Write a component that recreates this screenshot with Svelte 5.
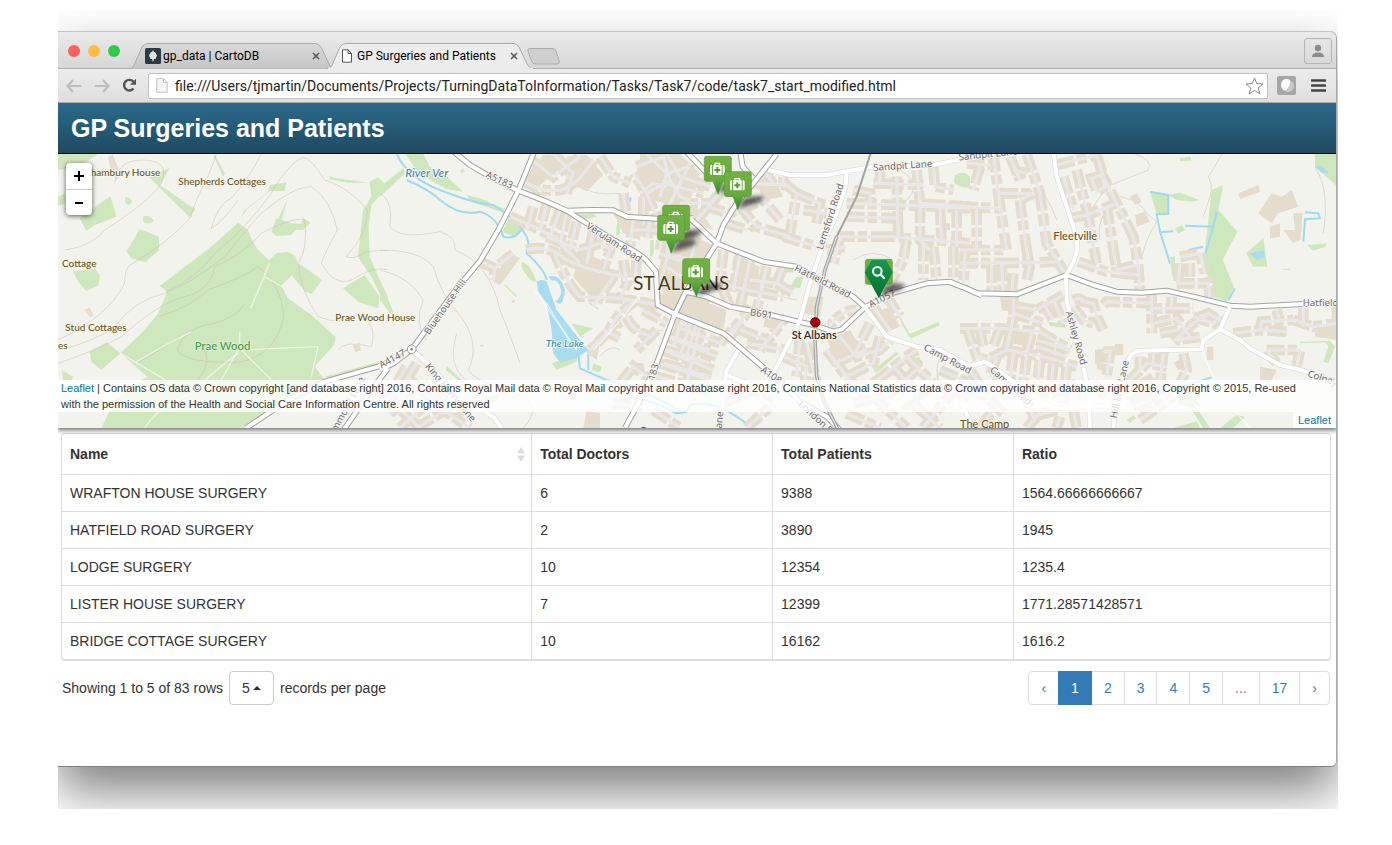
<script>
  const rows = [
    ['WRAFTON HOUSE SURGERY', '6', '9388', '1564.66666666667'],
    ['HATFIELD ROAD SURGERY', '2', '3890', '1945'],
    ['LODGE SURGERY', '10', '12354', '1235.4'],
    ['LISTER HOUSE SURGERY', '7', '12399', '1771.28571428571'],
    ['BRIDGE COTTAGE SURGERY', '10', '16162', '1616.2'],
  ];
  const pages = ['‹', '1', '2', '3', '4', '5', '...', '17', '›'];
  let pageSize = $state('5');

  // Map units: three per CSS pixel. Every tile carries its own left offset.
  const tiles = [
    {
      x: 0,
      woods: [
        'M540 218 L570 240 582 270 600 300 633 330 617 378 670 408 690 445 760 495 833 562 828 585 770 650 800 690 690 750 560 834 130 834 170 750 250 690 270 682 187 610 260 540 300 490 328 425 305 408 380 350 460 290Z',
        'M633 330 L655 310 690 306 712 318 720 342 700 378 668 408 617 378Z',
        'M700 375 L722 340 792 390 762 432 742 425Z',
        'M640 245 L655 205 700 220 730 222 735 203 757 218 735 240 712 240 700 255 655 258Z',
        'M245 237 L303 260 303 300 262 337 220 325 205 305Z',
        'M65 205 L158 138 175 200 110 225 85 242Z',
        'M45 365 L110 355 125 375 122 405 85 424 60 395Z',
        'M95 605 L145 577 187 610 130 660 100 635Z',
        'M0 12 L120 12 85 35 60 50 0 60Z M0 140 L22 130 22 160 0 168Z',
        'M255 200 Q270 190 288 212 Q272 226 256 216Z M200 145 Q212 134 222 155 Q214 170 203 160Z',
        'M272 80 L335 55 305 105 412 178 395 202Z',
        'M470 12 L500 70 495 80 468 20Z',
        'M545 210 L560 180 630 125 635 105 685 97 680 122 635 123 570 175Z M660 210 L688 145 672 208Z',
        'M815 78 L835 85 890 92 930 98 870 98 815 88Z',
        'M935 95 L960 82 990 110 940 165 932 230 935 320 970 400 990 440 990 480 940 380 900 320 915 180 940 140Z',
        'M855 415 L920 375 965 440 960 475 900 455Z',
        'M800 680 L960 636 965 645 830 690Z',
        'M12 660 L45 680 40 690 15 690Z',
      ],
      water: [], streams: [],
      contours: [
        'M475 12 Q460 60 430 120 T400 200 Q330 280 215 345 Q200 360 200 400 Q150 500 0 570',
        'M325 425 Q420 380 470 310 Q560 240 640 130 Q690 40 735 22 Q760 25 800 90 Q870 110 928 180 Q930 250 865 320 Q890 330 925 305 Q960 300 990 302',
        'M0 600 Q100 580 170 530 Q230 450 320 430 Q400 400 500 320 Q540 270 600 200 Q700 110 760 110 Q820 150 838 240 Q800 310 790 340 Q830 410 880 390 Q950 345 990 360',
        'M0 640 Q120 600 190 560 Q300 460 380 440 T470 350 Q560 310 610 250 Q700 200 740 210 Q750 300 720 340 Q730 430 780 500 Q850 530 900 490 Q960 520 940 590 Q860 570 840 600',
        'M300 500 Q400 470 450 420 Q560 380 600 350 Q670 400 678 500 Q650 620 540 637 Q380 640 358 600 Q380 530 470 520 Q540 500 560 460',
        'M20 300 Q100 290 140 240 Q280 150 310 100 Q340 30 250 30 Q180 30 170 100',
        'M460 235 Q480 160 520 145 Q570 90 610 12 M540 150 Q500 210 460 235',
        'M240 640 Q300 600 400 540 M420 690 Q460 640 440 600',
      ],
      built: ['M150 20 l14 -6 26 60 -14 16 -16 -20z', 'M80 480 l14 -8 12 24 -10 6z', 'M885 585 l20 -6 4 22 -18 6z'],
      paths: ['M635 340 L578 475 M617 378 L668 408', 'M187 610 L340 700 M235 635 Q330 580 400 545 M545 545 L545 600 780 590 M780 590 L760 680 M550 600 L650 700 M540 600 L490 690', 'M260 834 Q300 770 400 730 Q470 660 540 610'],
      minor: [], roads: [],
      main: ['M1000 632 L960 650 800 695 690 750 565 834', 'M990 655 L940 720 850 850'],
    },
    {
      x: 966,
      woods: [
        'M0 110 L70 55 75 70 0 140Z', 'M75 12 L130 12 150 50 200 80 250 125 200 118 150 90 110 60Z', 'M260 135 L300 145 380 180 360 185 270 152Z',
        'M390 200 L430 232 408 262 365 245Z', 'M425 335 Q450 340 470 395 Q450 400 425 350Z',
        'M375 403 L412 438 408 442 372 406Z', 'M0 412 Q30 450 40 490 L30 490 0 450Z', 'M575 520 L640 535 600 560Z', 'M515 640 L590 615 590 635 530 660Z', 'M640 640 L665 650 660 668 636 660Z', 'M200 648 L300 740 270 720 197 660Z', 'M712 200 L725 200 718 255 708 255Z M575 195 L640 190 650 200 600 210Z', 'M815 270 h6 v40 h-6z M105 600 l25 15 -5 8 -18 -12z',
        'M300 745 L360 735 340 760Z', 'M450 125 l30 0 5 12 -20 -2z',
      ],
      water: ['M470 395 Q485 385 500 395 L530 480 580 545 625 600 590 625 540 637 520 610 515 540 500 460 475 425Z', 'M505 380 Q540 370 555 420 Q552 455 540 462 L525 455 Q545 445 543 420 Q535 385 515 392Z'],
      streams: ['M50 12 Q80 80 180 120 T340 165 Q440 230 445 280 L440 310 Q495 360 500 390', 'M80 90 Q150 120 180 150 Q240 200 300 185 Q350 200 370 260 Q400 270 425 240', 'M595 610 L600 655 680 690 760 710 Q840 750 870 765 L910 790', 'M625 600 L625 660 M735 160 L752 145 750 155'],
      contours: [
        'M0 130 Q40 150 30 230 Q60 270 180 245 Q230 260 225 300 Q330 340 360 480 Q400 580 420 640',
        'M0 300 Q120 300 160 350 Q180 430 250 510 Q300 590 265 660 Q280 690 390 725 T430 834',
        'M0 360 Q90 380 130 450 Q100 520 140 570 M230 550 Q200 650 260 690',
        'M500 12 Q530 60 590 100 Q630 140 720 130 M730 480 Q760 560 850 540 M660 620 Q690 580 720 600',
      ],
      built: [
        'M430 90 l60 -76 60 0 -20 50 -60 50z', 'M560 20 l60 -6 50 60 -50 50 -40 -20z', 'M770 30 l80 -10 60 40 40 60 -60 50 -70 -20 -50 -60z', 'M300 335 l60 20 40 -40 20 10 -60 80 -20 -10 5 -30 -50 -20z', 'M700 190 l90 20 -10 60 -50 -20z', 'M840 290 l90 -50 60 60 0 190 -100 -10 -45 -60z', 'M600 300 l60 30 40 60 -60 60 -60 -70z', 'M620 610 l20 -40 20 10 -10 50z', 'M690 520 l30 -10 10 20 -25 10z M770 640 l20 0 5 30 -20 0z', 'M395 450 h10 v8 h-10z M300 584 h10 v6 h-10z',
        'M620 780 l40 10 0 44 -50 0z M240 60 l10 -5 5 10 -10 5z',
      ],
      paths: ['M465 420 Q560 560 590 600', 'M640 600 Q700 540 770 450', 'M500 460 Q560 560 590 600'],
      minor: [
        'M455 30 L520 80 600 20', 'M430 90 Q480 130 540 120 Q590 110 640 30', 'M520 12 L580 70 560 130', 'M660 20 L700 80 750 100', 'M770 50 L850 20 870 90 800 130 760 70', 'M800 130 L830 205 M870 90 L900 140 930 150', 'M860 12 L900 80 990 110', 'M930 40 L880 140 850 200',
        'M390 200 L460 230 540 270 M460 170 L440 240 M500 160 L480 240 M540 180 L510 260', 'M440 300 Q500 280 560 330 Q620 360 730 380', 'M400 310 L345 355 340 390 M345 355 L300 335', 'M500 260 L600 300 660 280 700 300', 'M560 190 L540 280 600 340', 'M590 215 L570 300 M640 240 L620 340 M700 270 L670 360', 'M730 130 L740 200 M790 140 L790 205 M750 240 L870 240 M760 210 L750 290 M810 210 L800 270 M870 210 L860 330 840 400', 'M520 300 Q560 400 600 440 L720 445 833 465', 'M730 330 L740 400 720 450 M770 330 L765 400', 'M700 380 L640 470', 'M670 540 L720 565 M770 450 Q700 500 690 540 L630 600',
        'M740 500 Q760 550 820 560 M790 480 L860 520 M830 540 L770 600', 'M870 560 L990 600 M860 600 L990 640 M850 640 L990 680 M900 500 L940 560 M930 520 L900 620 M960 530 L920 700',
        'M720 700 L760 650 800 680 M700 760 L790 770 M830 700 L960 720 M820 780 L900 834',
        'M0 760 L60 720 110 640 M30 790 L100 740 150 700 M60 834 L130 770 200 730 M110 834 L180 790 250 780 M20 740 L120 834 M80 680 L190 780 270 834 M80 650 L50 700',
        'M840 310 L920 340 990 350 M860 350 L930 400 M950 260 L930 340',
      ],
      roads: ['M95 598 L140 640 200 700 290 770 340 800 365 834'],
      main: [
        'M215 0 L270 45 330 80 415 122 500 155 560 182 620 220 700 270 Q780 310 800 332 L828 365 833 465 885 492 1010 542',
        'M465 0 L415 122 355 240 300 333 235 410 95 598 40 640 0 660', 'M560 182 L640 180 700 181 740 200 830 206 940 205',
      ],
    },
    {
      x: 1746,
      woods: ['M945 75 Q970 60 990 80 L990 112 Q960 115 942 98Z', 'M320 235 L340 230 338 248Z', 'M760 465 L810 552 895 515 900 525 812 566 790 530Z', 'M700 660 L770 605 775 612 710 668Z', 'M820 630 l15 -10 15 20 -20 20z', 'M450 410 l20 -30 20 0 -10 35z M410 355 l50 0 0 12 -40 0z', 'M780 770 L860 720 870 728 800 785Z', 'M30 270 h8 v50 h-8z'],
      water: [], streams: ['M0 745 L60 765 110 790 140 785 150 765 Q220 750 290 800 L340 834'],
      contours: ['M640 330 Q700 290 760 330 M780 60 Q850 100 800 150 T760 200', 'M900 620 Q870 700 940 760', 'M350 400 Q400 440 470 450'],
      built: [
        'M0 12 L120 12 180 70 150 120 70 100 0 160Z', 'M70 220 L230 290 190 340 60 300Z', 'M60 430 L180 450 260 480 250 540 110 490 50 460Z', 'M240 60 l60 10 -20 70 -50 -10z', 'M350 100 l60 0 20 40 -60 10z', 'M280 320 l80 30 -20 90 -60 -20z', 'M490 440 l60 0 -10 60 -50 -10z', 'M690 490 l60 -20 30 60 -50 20z', 'M560 570 l70 -30 30 50 -60 50z', 'M380 480 l60 20 -20 40 -50 -10z', 'M100 150 l80 30 40 60 -60 -20z', 'M900 220 l30 0 0 20 -30 0z',
      ],
      paths: ['M560 500 v60'],
      minor: [
        'M20 12 L80 70 60 140 M80 70 L150 50 M70 100 L190 130', 'M0 130 L40 100 80 110', 'M70 210 L60 300 M100 210 L90 310 150 330 M120 160 L210 160 250 120', 'M170 210 L240 130 M200 170 L270 190 330 160', 'M300 170 L350 230 450 260 M260 220 L320 240 M300 180 L370 150 420 210', 'M320 100 L440 105 470 130 450 250', 'M370 60 L400 100 M430 80 L430 110', 'M430 260 L530 290 M470 130 L540 160 530 220 M490 180 L560 190', 'M250 300 L240 400 270 470 M300 310 L280 420 M330 330 L300 470 340 490 M380 350 L350 480 M430 350 L410 400 330 390', 'M240 400 L320 420 430 440 M410 400 L460 430',
        'M620 160 L780 165 990 175 M620 200 L770 205 M590 260 L760 260 990 280 M770 80 L775 260 M830 60 L840 160 990 170 M700 100 L850 105 M880 50 L885 110 940 120 M840 165 L840 270 870 300 M900 170 L905 280 M950 180 L950 290', 'M640 120 L690 130 690 160 M720 65 L720 100', 'M800 270 L790 330 740 420 M850 280 L850 390 M880 290 L890 390 M940 290 L940 395', 'M560 300 L620 290 M600 260 L580 340',
        'M550 560 Q590 480 650 480 M600 560 L650 620 720 600 750 570 M690 520 L640 620 M720 560 L700 640 620 680 M560 600 L620 680 680 740 M580 640 L680 600 M700 470 L750 540 M740 440 L780 500', 'M590 720 L700 700 800 620 830 600 M640 760 L740 740 840 650 M800 620 L880 700 M760 650 L840 740',
        'M110 530 L240 580 M80 560 L230 620 M70 600 L220 660 M60 640 L210 690 M50 680 L200 720 M240 580 L330 480 M270 560 L310 510 M300 540 L380 570 M320 580 L440 600 M130 500 L100 590 M170 520 L140 620', 'M360 600 L440 500 M430 620 L500 650 490 740 M480 560 L470 680 M500 580 L530 700',
        'M270 700 L400 740 M250 760 L340 720 M320 834 L400 760 M620 790 L720 834 M700 740 L800 834 M820 760 L900 834 M880 700 L990 740 M900 660 L990 700 M850 834 L940 720',
      ],
      roads: ['M620 62 L617 110 590 190 540 310 510 400 480 510 400 670', 'M385 60 L450 75 560 75 620 64 700 50 880 45 990 22', 'M295 600 L258 665 240 834', 'M258 675 L470 755', 'M675 472 L740 560 830 590 900 600 1000 655'],
      main: [
        'M300 0 L308 50 340 85', 'M410 12 L340 100 290 160 250 225 230 280 195 335 135 430 105 492 50 640 0 750 -45 834', 'M135 0 L215 85',
        'M150 205 L230 280 280 300 370 335 470 350 530 385 640 440 675 472 755 430 860 400 930 395 990 420 1025 436', 'M135 425 L200 440 270 470 350 485 475 515 520 525 580 545 605 538 675 472', 'M100 490 L250 550 385 665 480 755 560 800 600 840',
      ],
    },
    {
      x: 2706,
      woods: ['M570 125 L625 135 625 190 590 192Z', 'M625 135 L660 128 718 150 700 155 650 150Z', 'M755 120 L790 105 775 180 832 245 788 330 822 410 800 455 750 435 760 400 730 360 735 300Z', 'M645 235 l20 -10 10 15 -20 10z M660 25 l30 -5 5 12 -35 2z', 'M858 310 L910 265 922 350 880 350Z', 'M1065 12 L1135 12 1135 112 1065 50Z', 'M630 320 l15 0 0 60 -8 0z M265 515 l50 8 0 10 -45 -5z', 'M1040 285 L1100 280 1095 290 1060 302Z', 'M1020 575 L1110 572 1125 590 1105 640 1090 635 1105 590 1095 577 1020 580Z', 'M655 730 L700 740 725 770 700 760 750 834 730 834 690 770 655 765Z', 'M780 834 L830 795 855 800 820 834Z M640 834 l70 -20 10 20z', 'M0 75 Q25 70 30 100 Q15 118 0 108Z', 'M500 810 l20 -14 8 8 -18 14z'],
      water: ['M868 310 L910 303 915 320 890 330Z', 'M1065 50 L1080 45 1108 70 1085 68Z'],
      streams: ['M570 125 L625 135 625 192 590 192 600 245 630 340 M600 247 L640 244 M675 227 L760 230 770 185 M730 290 L685 300 M760 230 L735 315', 'M1035 187 L1075 190 1080 205 1035 208 1030 275', 'M825 415 L805 450', 'M630 720 L755 682'],
      contours: ['M525 12 Q580 30 565 60 L440 110 380 200', 'M480 140 Q540 150 560 190 L590 215 Q550 280 545 330', 'M785 12 Q760 60 745 80 Q760 110 750 140 T730 200', 'M1065 50 Q1110 120 1090 250 M440 180 Q410 220 420 270', 'M220 90 Q260 130 290 210'],
      built: [
        'M120 440 l50 0 0 42 -45 0z', 'M150 540 l60 0 -5 50 -50 -10z', 'M405 600 l30 -4 5 40 -35 5z M465 582 l25 0 0 34 -25 0z M410 638 l35 4 0 20 -35 -4z', 'M525 195 l30 -10 15 30 -40 15z M510 140 l20 -10 15 25 -20 10z', 'M835 130 l60 -25 5 20 -60 22z', 'M895 190 l40 -60 30 10 30 -20 20 50 -60 20 -20 30z', 'M1000 190 l28 0 -6 80 -15 0z', 'M930 230 l30 -10 0 40 -30 5z M970 240 l30 0 20 30 -20 10z', 'M735 380 h25 v20 h-25z', 'M1065 530 l65 -10 0 50 -65 -10z', 'M900 650 l50 10 -20 40 -30 -10z', 'M1115 470 l14 0 0 40 -14 0z', 'M520 700 l50 -30 40 50 -60 70 -40 -30z', 'M970 356 h20 v4 h-20z', 'M740 590 h20 v40 h-20z', 'M640 640 l30 -20 10 30 -25 10z',
      ],
      paths: ['M728 600 Q740 660 830 790 L870 834'],
      minor: [
        'M100 12 L120 170 140 300 M150 20 L180 90 M200 12 L240 130 260 280 318 375', 'M0 170 L120 175 M0 300 L130 300 M0 340 L220 338 290 335 M50 170 L50 300 M15 300 L10 410 M95 345 L95 425 M120 130 L210 130 M180 150 Q190 240 205 330 M180 150 L220 130 M60 50 L40 120 M20 40 L90 45 M160 60 L200 70', 'M125 340 L130 430 M160 370 L155 430 M210 345 L200 390',
        'M290 45 L410 15 430 80 470 160 520 260 535 350 540 420 M330 205 L380 195 470 160 M350 60 L385 200 410 340 M395 85 L425 75 435 110 410 125Z M440 170 L470 360 M355 335 L440 365 535 375 M470 360 L530 345', 'M310 80 L340 180',
        'M430 465 L440 455 575 460 M575 430 L575 550 M635 440 L635 475 575 475 M635 475 L700 475 M650 400 L745 400 750 445 M660 340 L655 395 M660 320 L720 310 735 370 M690 340 L690 380', 'M580 520 L650 505 690 560 M600 550 L660 540 M640 575 L700 520 750 490 M700 500 L760 520 780 500 M720 560 L650 570', 'M720 500 L745 490 790 520',
        'M820 550 L900 540 980 545 M900 540 L905 515 1000 510 M950 480 L960 515 M1030 475 L1030 530 M1000 510 L1060 530 1130 520', 'M920 600 L1020 600 1010 650 M920 600 L950 640',
        'M170 470 L230 480 310 435 M160 490 L250 520 M160 440 L160 500 140 600 M0 535 L120 535 240 545 330 600 M140 600 L250 620 350 650 M140 600 L80 630 M120 535 L100 590 M60 535 L70 590 M20 535 L50 620 80 630 M215 550 L200 610 M230 570 L330 600 M230 590 L320 620', 'M250 460 L280 510 M280 450 L310 520', 'M340 450 Q360 440 370 455 L400 460 410 500 430 540 M340 470 L370 510 400 520 M400 460 L370 455',
        'M110 620 L90 680 M160 610 L150 690 M200 620 L190 700 M240 630 L230 720 M280 640 L270 740 M320 650 L310 760 M100 680 L200 720 280 730 350 700', 'M430 605 L450 605 440 680 M540 620 L540 660 M580 610 L580 650 M610 605 L600 700 M670 610 L680 660 660 700 M500 740 L560 700 620 720 M520 770 L600 740 M500 700 L560 640 620 650 M540 810 L640 740',
        'M0 700 L80 740 130 790 M30 660 L70 720 M60 834 L100 780 M190 720 L220 800 290 780 M200 834 L240 790 M340 780 L350 834 M300 800 L290 834 M400 700 L440 740',
      ],
      roads: ['M280 0 L290 80 330 200 Q354 270 352 290 Q350 330 318 375 L320 450 345 560 370 650 385 720 390 834', 'M460 834 L470 740 500 640 Q515 604 535 602 L725 598 730 570 780 538 810 470', 'M780 538 L840 570 870 595 960 645 1030 662 1135 700', 'M0 670 L40 645 75 635 100 650 180 710 280 775 340 775 390 765 470 775', 'M0 750 L40 834', 'M0 22 L190 0'],
      main: ['M-35 395 L30 420 50 430 170 433 320 375 400 405 470 425 545 428 620 422 700 440 810 467 870 470 1030 462 1150 458'],
    },
  ];

  // [text, x, y, rotation, class]
  const labels = [
    ['hambury House', 98, 68, 0, 'place'], ['Shepherds Cottages', 361, 94, 0, 'place'], ['Cottage', 12, 340, 0, 'place'], ['Stud Cottages', 22, 533, 0, 'place'], ['es', 0, 588, 0, 'place'],
    ['Prae Wood House', 832, 502, 0, 'place'], ['Fleetville', 2986, 259, 0, 'place big'], ['The Camp', 2706, 822, 0, 'place big'],
    ['Prae Wood', 410, 587, 0, 'wood'], ['River Ver', 1042, 69, 0, 'river big-water'], ['The Lake', 1463, 581, 0, 'river'],
    ['A5183', 1286, 72, 25, 'road'], ['Verulam Road', 1588, 225, 33, 'road'], ['Bluehouse Hill', 1105, 550, -55, 'road'], ['A4147', 966, 647, -29, 'road'],
    ['King Harry Lane', 1108, 644, 50, 'road'], ['183', 1780, 690, -75, 'road'], ['Sandpit Lane', 2446, 53, -4, 'road'], ['Sandpit Lane', 2702, 22, -6, 'road'],
    ['Lemsford Road', 2284, 298, -72, 'road'], ['Hatfield Road', 2212, 352, 27, 'road'], ['B691', 2076, 486, 9, 'road'], ['A1057', 2434, 464, -26, 'road'], ['A1081', 2112, 656, 35, 'road'],
    ['London Road', 2226, 757, 43, 'road'], ['Lane', 1980, 850, -85, 'road'], ['Camp Road', 2600, 590, 28, 'road'], ['Camp Road', 2800, 655, 42, 'road'], ['Ashley Road', 3032, 484, 74, 'road'],
    ['Hill End Lane', 3166, 804, -78, 'road'], ['Hatfield Road', 3734, 457, 0, 'road'], ['Colney', 3750, 670, 18, 'road'], ['Hammond Lane', 810, 875, -62, 'road'],
    ['ST ALBANS', 1726, 402, 0, 'city'], ['St Albans', 2201, 557, 0, 'station'],
  ];
  const markers = [[1938, 18], [1998, 64], [1813, 165], [1798, 195], [1873, 325], [2421, 327]];
</script>

{#snippet tabShape(active)}
  <svg class="tab-shape" viewBox="0 0 208 26" preserveAspectRatio="none" aria-hidden="true">
    <path d="M0 25.500 C4 25 5 23 6 20 L13 4 Q15 .5 19 .5 H186 Q190 .5 192 4 L200 21 Q202 25.500 206 25.500" fill={active ? '#ececec' : 'url(#tab-idle)'} stroke="#aaa" />
    {#if active}<path d="M1 25.500 H206" stroke="#ececec" stroke-width="2" />{/if}
  </svg>
{/snippet}

<main class="stage">
  <div class="window">
    <div class="tabstrip">
      <div class="lights"><i class="red"></i><i class="amber"></i><i class="green"></i></div>
      <div class="tabs">
        <button class="tab idle">
          <svg class="defs" width="0" height="0" aria-hidden="true"><defs><linearGradient id="tab-idle" x2="0" y2="1"><stop stop-color="#d9d9d9" /><stop offset="1" stop-color="#c6c6c6" /></linearGradient></defs></svg>
          {@render tabShape(false)}
          <svg class="fav" width="16" height="16" viewBox="0 0 16 16" aria-hidden="true"><rect width="16" height="16" rx="1.500" fill="#2c3b41" /><path d="M8 2 L9 4 10 4 12 7.500 10.500 11 9 11 8 14 7 11 5.500 11 4 7.500 6 4 7 4Z" fill="#dfe4e6" /></svg>
          <span>gp_data | CartoDB</span>
          <svg class="close" width="8" height="8" viewBox="0 0 8 8" aria-hidden="true"><path d="M1 1 L7 7 M7 1 L1 7" stroke="#555" stroke-width="1.500" /></svg>
        </button>
        <button class="tab active">
          {@render tabShape(true)}
          <svg class="fav" width="12" height="14" viewBox="0 0 12 14" aria-hidden="true"><path d="M1.500 .8 H7 L10.500 4.200 V13.200 H1.500Z M7 1 V4.500 H10.500" fill="#fff" stroke="#555" /></svg>
          <span>GP Surgeries and Patients</span>
          <svg class="close" width="8" height="8" viewBox="0 0 8 8" aria-hidden="true"><path d="M1 1 L7 7 M7 1 L1 7" stroke="#555" stroke-width="1.500" /></svg>
        </button>
        <button class="newtab" aria-label="New tab"><svg width="33" height="17" viewBox="0 0 33 17"><path d="M3 .5 H25 Q28 .5 29 3 L32.300 13.500 Q32.500 16 30 16 H9 Q6 16 5 14 L.8 3 Q.5 .5 3 .5Z" fill="#cfcfcf" stroke="#aaa" /></svg></button>
      </div>
      <button class="profile" aria-label="Profile"><svg width="14" height="14" viewBox="0 0 14 14"><circle cx="7" cy="4" r="3.200" fill="#8c8c8c" /><path d="M1 13 Q1 8.500 7 8.500 T13 13Z" fill="#8c8c8c" /></svg></button>
    </div>

    <div class="toolbar">
      <button aria-label="Back"><svg width="16" height="14" viewBox="0 0 16 14"><path d="M7 1 L1.500 7 L7 13 M2 7 H15.500" fill="none" stroke="#bdbdbd" stroke-width="2.200" /></svg></button>
      <button aria-label="Forward"><svg width="16" height="14" viewBox="0 0 16 14"><path d="M9 1 L14.500 7 L9 13 M14 7 H.5" fill="none" stroke="#bdbdbd" stroke-width="2.200" /></svg></button>
      <button aria-label="Reload"><svg width="15" height="15" viewBox="0 0 15 15"><path d="M11.500 10.500 A5.300 5.300 0 1 1 11.300 3.600" fill="none" stroke="#555" stroke-width="2.400" /><path d="M14 .8 V6.800 H8Z" fill="#555" /></svg></button>
      <div class="address">
        <svg width="12" height="15" viewBox="0 0 12 15" aria-hidden="true"><path d="M.8 .5 H7.500 L11.200 4.200 V14.300 H.8Z M7.500 .5 V4.500 H11.200" fill="#f6f6f6" stroke="#c2c2c2" /></svg>
        <input aria-label="Address" value="file:///Users/tjmartin/Documents/Projects/TurningDataToInformation/Tasks/Task7/code/task7_start_modified.html" />
        <button aria-label="Bookmark"><svg width="19" height="18" viewBox="0 0 19 18"><path d="M9.500 1 L11.800 6.600 L18 7 L13.200 10.900 L14.900 16.800 L9.500 13.500 L4.100 16.800 L5.800 10.900 L1 7 L7.200 6.600Z" fill="#fff" stroke="#888" stroke-linejoin="round" /></svg></button>
      </div>
      <button aria-label="Extension"><svg width="19" height="19" viewBox="0 0 19 19"><rect width="19" height="19" rx="2" fill="#a6a6a6" /><circle cx="11" cy="10" r="6" fill="#c9c9c9" /><path d="M6 4 Q9 2 13 4 Q14 9 9 14 Q5 15 4 10 Q4 6 6 4Z" fill="#fff" /></svg></button>
      <button aria-label="Menu"><svg width="15" height="13" viewBox="0 0 15 13"><path d="M1 1.500 H14 M1 6.500 H14 M1 11.500 H14" stroke="#444" stroke-width="2.600" stroke-linecap="round" /></svg></button>
    </div>

    <header><h1>GP Surgeries and Patients</h1></header>

    <section class="map" aria-label="Map of St Albans">
      <svg class="canvas" viewBox="0 12 3834 822" preserveAspectRatio="xMidYMid slice">
        <defs>
          <linearGradient id="pin" x2="0" y2="1"><stop stop-color="#72b043" /><stop offset=".6" stop-color="#68ab3c" /><stop offset="1" stop-color="#278b2b" /></linearGradient>
          <linearGradient id="pin-dark" x2="0" y2="1"><stop stop-color="#1a9850" /><stop offset="1" stop-color="#006f2b" /></linearGradient>
          <filter id="soft" x="-50%" y="-50%" width="200%" height="200%"><feGaussianBlur stdDeviation="7" /></filter>
        </defs>
        <rect y="0" width="3834" height="840" fill="#f3f3ed" />
        {#each tiles as t}<g transform="translate({t.x} 0)" fill="#cfe7bd">{#each t.woods as d}<path {d} />{/each}</g>{/each}
        {#each tiles as t}<g transform="translate({t.x} 0)" class="contour">{#each t.contours as d}<path {d} />{/each}</g>{/each}
        {#each tiles as t}
          <g transform="translate({t.x} 0)">
            <g fill="#a9dcee">{#each t.water as d}<path {d} />{/each}</g>
            <g class="stream">{#each t.streams as d}<path {d} />{/each}</g>
            <g fill="#e4dccd">{#each t.built as d}<path {d} />{/each}</g>
            <g class="houses">{#each t.minor as d}<path {d} />{/each}</g>
          </g>
        {/each}
        {#each tiles as t}
          <g transform="translate({t.x} 0)">
            <g class="verge">{#each t.minor as d}<path {d} />{/each}</g>
            <g class="lane">{#each t.minor as d}<path {d} />{/each}</g>
            <g class="track">{#each t.paths as d}<path {d} />{/each}</g>
            <g class="road-edge">{#each t.roads as d}<path {d} />{/each}</g>
            <g class="main-edge">{#each t.main as d}<path {d} />{/each}</g>
          </g>
        {/each}
        {#each tiles as t}<g transform="translate({t.x} 0)" class="road-fill">{#each t.roads as d}<path {d} />{/each}{#each t.main as d}<path {d} />{/each}</g>{/each}
        <g fill="none">
          <path d="M2441 0 L2396 140 2336 260" stroke="#a2a2a2" stroke-width="6" />
          <path d="M2336 260 L2301 360 2276 470 2271 570 2276 680 2296 750 2341 840" stroke="#a5a5a5" stroke-width="11" />
          <path d="M2336 260 L2301 360 2276 470 2271 570 2276 680 2296 750 2341 840" stroke="#dedede" stroke-width="4" />
        </g>
        <circle cx="1061" cy="598" r="13" fill="#fff" stroke="#999" stroke-width="3" /><circle cx="1061" cy="598" r="4" fill="#888" />
        {#each labels as [text, x, y, angle, kind]}
          <text class={kind} transform="translate({x} {y}) rotate({angle})" dy=".34em">{text}</text>
        {/each}
        <circle cx="2272" cy="517" r="14" fill="#b30000" stroke="#3b1512" stroke-width="3" />
        <circle cx="1757" cy="844" r="13" fill="#5b2a28" />
        {#each markers as [x, y]}
          <path transform="translate({x} {y})" d="M42 112 L62 80 Q94 70 118 76 Q118 90 98 96Z" fill="#000" opacity=".6" filter="url(#soft)" />
        {/each}
        {#each markers as [x, y]}
          <g transform="translate({x} {y})">
            <path d="M8 1 H75 Q82 1 82 8 V69 Q82 76 75 76 H57 L42 115 L27 76 H8 Q1 76 1 69 V8 Q1 1 8 1Z" fill="url(#pin)" stroke="#5a9a37" stroke-width="2" />
            <path d="M22 27 H24 V57 H22 Q18 57 18 52 V32 Q18 27 22 27Z M58 27 H56 V57 H58 Q62 57 62 52 V32 Q62 27 58 27Z M27 27 H31 V22 Q31 20 33 20 H47 Q49 20 49 22 V27 H53 V57 H27Z" fill="#fff" />
            <path d="M35 27 h10 v-3 h-10z" fill="#6cac3e" />
            <path d="M37 33 h6 v6 h6 v6 h-6 v6 h-6 v-6 h-6 v-6 h6z" fill="#529b31" />
          </g>
        {/each}
        <g transform="translate(2419 327)">
          <path d="M22 3 H66 L85 40 43 116 1 40Z" fill="url(#pin-dark)" />
          <circle cx="39" cy="37" r="13" fill="none" stroke="#fff" stroke-width="6" /><path d="M49 47 L59 57" stroke="#fff" stroke-width="7" stroke-linecap="round" />
        </g>
      </svg>
      <div class="zoom"><button aria-label="Zoom in"><svg width="10" height="10" viewBox="0 0 10 10"><path d="M5 0 V10 M0 5 H10" stroke="#000" stroke-width="2" /></svg></button><button aria-label="Zoom out"><svg width="10" height="10" viewBox="0 0 10 10"><path d="M1 5 H9" stroke="#000" stroke-width="2" /></svg></button></div>
      <div class="credits">
        <p><a href="#leaflet">Leaflet</a> | Contains OS data © Crown copyright [and database right] 2016, Contains Royal Mail data © Royal Mail copyright and Database right 2016, Contains National Statistics data © Crown copyright and database right 2016, Copyright © 2015, Re-used with the permission of the Health and Social Care Information Centre. All rights reserved</p>
        <p class="corner"><a href="#leaflet">Leaflet</a></p>
      </div>
    </section>

    <section class="data">
      <div class="frame">
        <table>
          <thead>
            <tr>
              <th class="name"><div>Name <svg width="8" height="15" viewBox="0 0 8 15" aria-hidden="true"><path d="M0 6.500 L4 0 L8 6.500Z M0 8.500 L4 15 L8 8.500Z" fill="#ddd" /></svg></div></th>
              <th class="doctors">Total Doctors</th><th class="patients">Total Patients</th><th>Ratio</th>
            </tr>
          </thead>
          <tbody>
            {#each rows as row}<tr>{#each row as cell}<td>{cell}</td>{/each}</tr>{/each}
          </tbody>
        </table>
      </div>
      <footer>
        <div class="info">
          <span>Showing 1 to 5 of 83 rows</span>
          <span class="size">
            <select id="page-size" bind:value={pageSize}><option>5</option><option>10</option><option>25</option></select>
            <svg width="8" height="4" viewBox="0 0 8 4" aria-hidden="true"><path d="M0 4 L4 0 L8 4Z" fill="#333" /></svg>
          </span>
          <label for="page-size">records per page</label>
        </div>
        <nav aria-label="Pages">
          {#each pages as p}<a href="#page" class:current={p === '1'} class:gap={p === '...'}>{p}</a>{/each}
        </nav>
      </footer>
    </section>
  </div>
</main>

<style>
  :global(body) { background: #fff; }
  .stage, .stage * { box-sizing: border-box; }
  .stage { margin: 10px 54px 36px 58px; padding: 21px 2px 43px 0; overflow: hidden; font: 14px/20px "Liberation Sans", Arial, sans-serif; color: #333; }
  .window { background: #fff; border-radius: 0 7px 5px 0; box-shadow: 1px 0 0 #a8a8a8, 0 1px 0 #808080, 0 25px 50px rgba(0, 0, 0, .5); }
  button { border: 0; padding: 0; background: none; font: inherit; color: inherit; }
  button, a { cursor: pointer; }
  svg { display: block; flex: none; }
  a { color: #337ab7; text-decoration: none; }

  .tabstrip { display: flex; align-items: flex-end; height: 38px; padding-left: 10px; background: linear-gradient(#ebebeb, #d6d6d6); border-top: 1px solid #c4c4c4; border-bottom: 1px solid #b0b0b0; border-radius: 0 7px 0 0; }
  .lights { display: flex; gap: 8px; align-self: center; margin-top: 2px; }
  .lights i { width: 12px; height: 12px; border-radius: 50%; }
  .red { background: #fc605b; } .amber { background: #fdbc40; } .green { background: #34c84a; }
  .tabs { display: flex; align-items: flex-end; flex: 1; margin: 0 0 -1px 9px; font: 12px/16px Roboto, Inter, sans-serif; color: #000; }
  .tab { position: relative; display: flex; align-items: center; width: 208px; height: 26px; padding: 0 17px 0 16px; text-align: left; }
  .tab span { position: relative; flex: 1; white-space: nowrap; }
  .tab .fav, .tab .close { position: relative; }
  .tab .fav { margin-right: 2px; }
  .tab.idle { margin-right: -10px; }
  .tab.active { padding-left: 14px; }
  .tab.active .fav { margin-right: 4px; }
  .tab-shape { position: absolute; inset: 0; width: 100%; height: 100%; }
  .defs { position: absolute; }
  .newtab { margin: 0 0 4px -8px; }
  .profile { display: grid; place-items: center; width: 28px; height: 26px; margin: 0 4px 4px 0; border: 1px solid #b5b5b5; border-radius: 3px; }

  .toolbar { display: flex; align-items: center; gap: 12px; height: 34px; padding: 0 10px 0 8px; background: linear-gradient(#ececec, #dfdfdf); border-bottom: 1px solid #aaa; }
  .address { display: flex; align-items: center; flex: 1; gap: 7px; height: 26px; margin: 0 -3px 0 -1px; padding: 0 3px 0 7px; background: #fff; border: 1px solid #c0c0c0; border-radius: 2px; }
  .address input { flex: 1; min-width: 0; padding: 0; border: 0; outline: 0; background: none; color: #222; font: 14px/20px Roboto, Inter, sans-serif; }
  .toolbar > button:last-child { margin-left: 3px; }

  header { height: 51px; padding: 0 13px; background: linear-gradient(#2b6a8a, #1f4a61); border-bottom: 1px solid #000; }
  h1 { margin: 0; color: #fff; font-size: 25px; line-height: 50px; font-weight: 700; }

  .map { position: relative; height: 274px; box-shadow: 0 1px 5px 1px rgba(0, 0, 0, .6); clip-path: inset(0 0 -8px 0); }
  .canvas { width: 100%; height: 100%; }
  .contour path { fill: none; stroke: #c9bdb0; stroke-opacity: .5; stroke-width: 3; }
  .stream path { fill: none; stroke: #9fdaf0; stroke-width: 6; stroke-linejoin: round; }
  .houses path { fill: none; stroke: #e4dccd; stroke-width: 32; stroke-dasharray: 54 9 28 12 74 10 36 16; }
  .verge path { fill: none; stroke: #efece3; stroke-width: 9; }
  .lane path { fill: none; stroke: #e6e6ed; stroke-width: 5; }
  .track path { fill: none; stroke: #fff; stroke-opacity: .6; stroke-width: 4; }
  .road-edge path, .main-edge path, .road-fill path { fill: none; stroke-linejoin: round; }
  .road-edge path { stroke: #d6d6d6; stroke-width: 15; }
  .main-edge path { stroke: #a3a3a3; stroke-width: 18; }
  .road-fill path { stroke: #fff; stroke-width: 12; }
  text { font-family: Lato, sans-serif; paint-order: stroke; stroke: #f6f5ef; stroke-width: 6px; stroke-linejoin: round; }
  .place { font-size: 30px; fill: #6b5520; font-weight: 500; }
  .place.big { font-size: 33px; }
  .wood { font-size: 34px; fill: #4a9e50; font-weight: 500; stroke: #dcefd0; }
  .river { font-size: 31px; font-style: italic; fill: #3a90b3; font-weight: 500; }
  .river.big-water { font-size: 35px; }
  .road { font-family: "Noto Sans", sans-serif; font-size: 29px; fill: #6d6d72; }
  .city { font-size: 56px; fill: #453717; stroke-width: 3px; }
  .station { font-size: 33px; fill: #2d2d2d; font-weight: 600; }

  .zoom { position: absolute; top: 9px; left: 8px; width: 26px; background: #fff; border-radius: 4px; box-shadow: 0 1px 5px rgba(0, 0, 0, .65); }
  .zoom button { display: grid; place-items: center; width: 26px; height: 26px; }
  .zoom button + button { border-top: 1px solid #ccc; }
  .credits { position: absolute; inset: auto 0 0; font-size: 11px; line-height: 16px; }
  .credits p { margin: 0; padding: 0 20px 0 3px; background: rgba(255, 255, 255, .78); }
  .credits .corner { width: max-content; margin-left: auto; padding: 0 5px; }
  .credits a { color: #0078a8; }

  .data { padding: 5px 5px 61px 3px; }
  .frame { border: 1px solid #ddd; border-bottom-width: 2px; border-radius: 4px; overflow: hidden; }
  table { width: 100%; border-collapse: separate; border-spacing: 0; table-layout: fixed; }
  th, td { height: 37px; padding: 8px; text-align: left; }
  th { height: 40px; }
  th + th, td + td { border-left: 1px solid #ddd; }
  td { border-top: 1px solid #ddd; }
  .name { width: 37%; } .doctors, .patients { width: 19%; }
  .name { padding-right: 6px; }
  .name div { display: flex; justify-content: space-between; align-items: center; }
  footer { display: flex; justify-content: space-between; align-items: flex-start; padding: 10px 1px 0; }
  .info { display: flex; align-items: center; gap: 6px; height: 34px; }
  .size { position: relative; display: flex; align-items: center; }
  select { appearance: none; width: 45px; height: 34px; padding: 0 12px; border: 1px solid #ccc; border-radius: 4px; background: #fff; color: #333; font: inherit; }
  .size svg { position: absolute; right: 13px; pointer-events: none; }
  nav { display: flex; }
  nav a { padding: 6px 12px; border: 1px solid #ddd; margin-left: -1px; background: #fff; }
  nav a:first-child { border-radius: 4px 0 0 4px; }
  nav a:last-child { border-radius: 0 4px 4px 0; }
  nav .current { position: relative; background: #337ab7; border-color: #337ab7; color: #fff; }
  nav .gap { color: #777; }
</style>
